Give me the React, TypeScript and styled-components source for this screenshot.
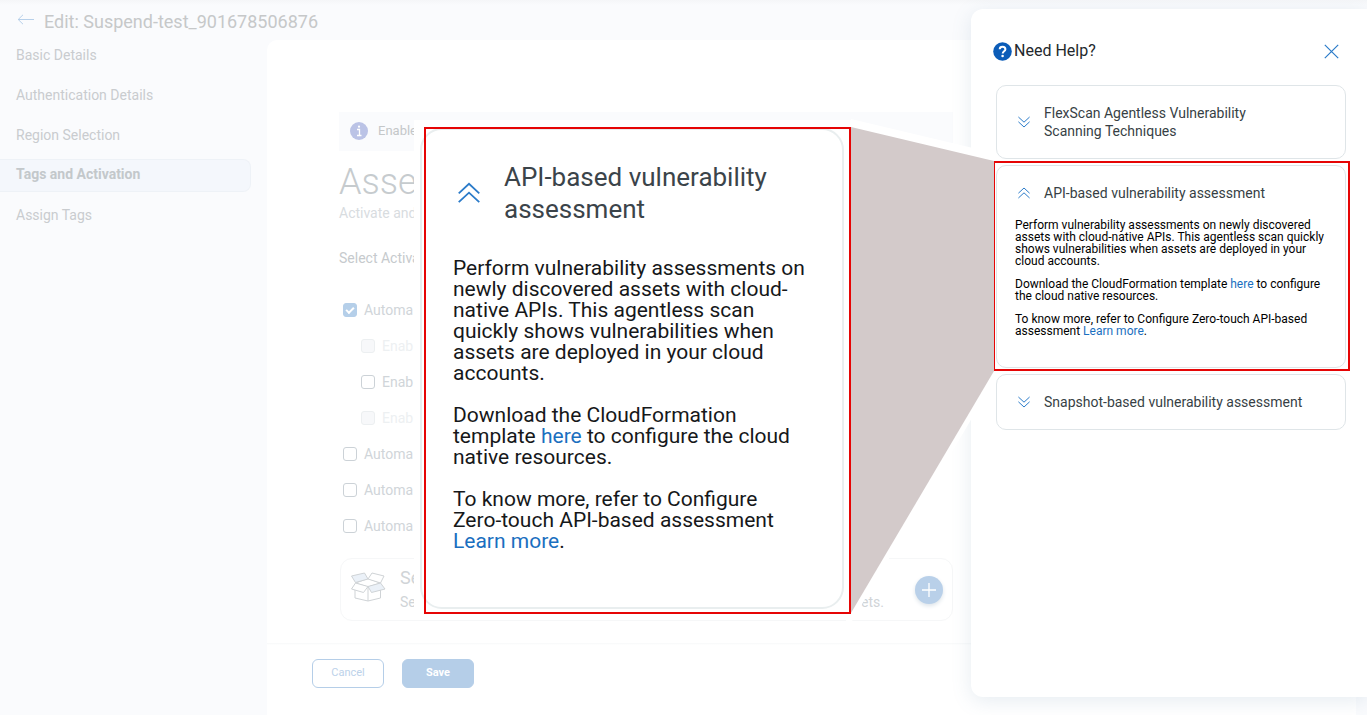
import React from "react";
import styled, { createGlobalStyle, css } from "styled-components";

const GlobalStyle = createGlobalStyle`
  *, *::before, *::after { box-sizing: border-box; }
  body {
    margin: 0;
    background: #fafbfd;
    font-family: Roboto, "Liberation Sans", sans-serif;
  }
  button, input { font-family: inherit; }
  h1, h2, h3, p { margin: 0; font-weight: 400; }
`;

const Page = styled.div`
  position: relative;
  display: flex;
  flex-direction: column;
  min-height: 100vh;
  overflow: hidden;
`;

const TopBar = styled.header`
  display: flex;
  align-items: center;
  gap: 8px;
  height: 39px;
  padding: 4px 16px 0;
  background: linear-gradient(#f5f6f8, #fafbfd 5px);
`;

const IconButton = styled.button`
  display: flex;
  align-items: center;
  justify-content: center;
  padding: 0;
  border: 0;
  background: none;
  cursor: pointer;
`;

const BackButton = styled(IconButton)`
  width: 20px;
  height: 20px;
  padding-bottom: 4px;
`;

const PageTitle = styled.h1`
  font-size: 18px;
  line-height: 24px;
  color: #c6c8c9;
`;

const Body = styled.div`
  display: flex;
  flex: 1;
`;

const Sidebar = styled.nav`
  display: flex;
  flex-direction: column;
  gap: 7px;
  width: 251px;
  margin-right: 16px;
  flex-shrink: 0;
`;

const NavLink = styled.a<{ $active?: boolean }>`
  padding: 7px 15px;
  border: 1px solid transparent;
  border-left: 0;
  border-radius: 0 8px 8px 0;
  padding-left: 16px;
  font-size: 14px;
  line-height: 17px;
  color: #c9cccf;
  text-decoration: none;
  ${(p) =>
    p.$active &&
    css`
      padding-top: 6px;
      padding-bottom: 8px;
      border-color: #eef2f7;
      background: #f4f7fc;
      color: #c3c8cb;
      font-weight: 700;
    `}
`;

const Main = styled.main`
  display: flex;
  flex: 1;
  flex-direction: column;
  margin: 1px 11px 0 0;
  border-top-left-radius: 10px;
  background: #fff;
`;

const Content = styled.div`
  display: flex;
  flex: 1;
  flex-direction: column;
  max-width: 686px;
  padding: 72px 0 22px 72px;
`;

const InfoBanner = styled.div`
  display: flex;
  align-items: center;
  gap: 10px;
  height: 39px;
  padding: 0 11px 2px;
  background: #fafbfd;
  font-size: 13px;
  line-height: 18px;
  color: #c4c7c9;
`;

const SectionTitle = styled.h2`
  margin-top: 9px;
  font-size: 36px;
  font-weight: 300;
  line-height: 44px;
  color: #c6cbce;
`;

const SectionHint = styled.p`
  font-size: 14px;
  line-height: 18px;
  color: #d8dcdf;
`;

const GroupLabel = styled.p`
  margin-top: 27px;
  font-size: 14px;
  line-height: 18px;
  color: #c6cacd;
`;

const OptionList = styled.div`
  display: flex;
  flex-direction: column;
  gap: 18px;
  margin-top: 34px;
  padding-left: 4px;
`;

const Option = styled.label<{ $nested?: boolean; $disabled?: boolean }>`
  display: flex;
  align-items: center;
  gap: 7px;
  padding-left: ${(p) => (p.$nested ? 18 : 0)}px;
  font-size: 14px;
  line-height: 18px;
  color: ${(p) => (p.$disabled ? "#edf0f2" : "#d0d5d9")};
`;

const CheckBox = styled.input`
  appearance: none;
  display: grid;
  place-items: center;
  width: 14px;
  height: 14px;
  margin: 0;
  border: 1px solid #ccd2d7;
  border-radius: 3px;
  background: #fff;
  &:disabled {
    border-color: #eceff1;
    background: #f7f8fa;
  }
  &:checked {
    border-color: #b5cfe9;
    background: #b5cfe9;
  }
  &:checked::before {
    content: "";
    width: 8px;
    height: 5px;
    margin-bottom: 2px;
    border: solid #fff;
    border-width: 0 0 2px 2px;
    transform: rotate(-45deg);
  }
`;

const TagCard = styled.section`
  display: flex;
  align-items: center;
  height: 63px;
  margin: 23px 0 0 1px;
  padding: 0 9px;
  border: 1px solid #f6f7f8;
  border-radius: 12px;
`;

const TagText = styled.div`
  display: flex;
  flex: 1;
  flex-direction: column;
  margin-left: 14px;
  color: #d0d4d7;
`;

const TagTitle = styled.h3`
  font-size: 18px;
  line-height: 24px;
`;

const TagLine = styled.p`
  display: flex;
  justify-content: space-between;
  padding-right: 31px;
  font-size: 14px;
  line-height: 24px;
`;

const AddButton = styled(IconButton)`
  width: 28px;
  height: 28px;
  border-radius: 50%;
  background: #b9d0e9;
  box-shadow: 0 2px 4px #dde4ea;
`;

const Footer = styled.footer`
  display: flex;
  align-items: flex-start;
  gap: 18px;
  height: 72px;
  padding: 16px 45px 0;
  background: linear-gradient(#f7f8f9, #fff 2px);
`;

const ActionButton = styled.button<{ $primary?: boolean }>`
  width: 72px;
  height: 29px;
  padding: 0 0 2px;
  border: 1px solid #b5cee8;
  border-radius: 6px;
  background: ${(p) => (p.$primary ? "#b5cee8" : "#fff")};
  color: ${(p) => (p.$primary ? "#fff" : "#bcd2ea")};
  font-size: 11px;
  font-weight: ${(p) => (p.$primary ? 700 : 400)};
`;

const HelpPanel = styled.aside`
  position: absolute;
  top: 9px;
  right: 0;
  bottom: 18px;
  display: flex;
  flex-direction: column;
  width: 396px;
  padding: 32px 21px 0 25px;
  border-radius: 12px 0 0 12px;
  background: #fff;
  box-shadow: 0 4px 20px rgba(90, 125, 160, 0.15);
`;

const HelpHeader = styled.div`
  display: flex;
  align-items: center;
  gap: 2px;
  height: 20px;
  margin: 0 7px 24px -3px;
`;

const HelpTitle = styled.h2`
  flex: 1;
  font-size: 16px;
  line-height: 20px;
  color: #23282c;
`;

const Accordion = styled.div`
  display: flex;
  flex-direction: column;
  gap: 6px;
`;

const Card = styled.section`
  position: relative;
  border: 1px solid #dfe5e8;
  border-radius: 10px;
`;

const CardHead = styled.button<{ $open?: boolean }>`
  display: flex;
  align-items: center;
  gap: 14px;
  width: 100%;
  padding: 18px 20px ${(p) => (p.$open ? 17 : 18)}px 21px;
  border: 0;
  background: none;
  color: #373f45;
  font-size: 14px;
  line-height: 18px;
  text-align: left;
  cursor: pointer;
`;

const CardBody = styled.div`
  display: flex;
  flex-direction: column;
  gap: 11px;
  padding: 0 20px 30px 18px;
  color: #000;
  font-size: 12px;
  line-height: 12px;
`;

const Link = styled.a`
  display: inline-block;
  color: #1a6fc0;
  text-decoration: none;
`;

/* Red frame drawn round the expanded card */
const Highlight = styled.div`
  position: absolute;
  inset: -5px -5px -4px -4px;
  border: 2px solid #e60505;
  pointer-events: none;
`;

const Connector = styled.svg`
  position: absolute;
  top: 115px;
  right: 373px;
`;

/* Enlarged copy of the expanded card; the outline keeps the red frame above the card edge */
const Callout = styled.section`
  position: absolute;
  top: 127px;
  right: 516px;
  isolation: isolate;
  width: 427px;
  height: 487px;
  padding: 34px 42px 0 29px;
  outline: 2px solid #e60505;
  outline-offset: -2px;
  &::before {
    content: "";
    position: absolute;
    z-index: -2;
    inset: -7px 0 5px -10px;
    background: #fff;
  }
  &::after {
    content: "";
    position: absolute;
    z-index: -1;
    inset: 1px 7px 5px -4px;
    border: 2px solid #e9eeef;
    border-radius: 22px;
  }
`;

const CalloutHead = styled.div`
  display: flex;
  align-items: center;
  gap: 24px;
  padding-left: 5px;
`;

const CalloutTitle = styled.h3`
  font-size: 26px;
  line-height: 32px;
  color: #3b444a;
`;

const CalloutBody = styled.div`
  display: flex;
  flex-direction: column;
  gap: 21px;
  margin-top: 33px;
  color: #16181a;
  font-size: 21px;
  line-height: 21px;
`;

const Chevrons = ({ up, size = 12 }: { up?: boolean; size?: number }) => (
  <svg width={size} height={size} viewBox="0 0 12 12" fill="none" stroke="#2b7bc9" aria-hidden="true">
    {up ? (
      <path d="M.4 6.2 6 1l5.600 5.200M.4 11 6 5.800 11.600 11" />
    ) : (
      <path d="M.4 1 6 6.200 11.600 1M.4 5.800 6 11l5.600-5.200" />
    )}
  </svg>
);

const BoxSvg = styled.svg`
  margin-bottom: 6px;
`;

const BoxIcon = () => (
  <BoxSvg width="36" height="32" viewBox="0 0 36 32" fill="#fff" stroke="#cfd3d6" strokeWidth="1" strokeLinejoin="round" aria-hidden="true">
    <path d="M5 16v11l13 3 12.500-3V16L18 11z" />
    <path d="M18 16v14" />
    <path d="M5.500 12 18 7.500 30.500 12 18 16z" />
    <path d="M1.500 5 14.500 2 18 8 5.500 11.500z" fill="#ebf1f8" />
    <path d="M18 8 22 2l12 3-3.500 7z" />
    <path d="M5.500 12 18 15.500 13.500 21.500 1.500 18z" />
    <path d="M18 15.500 30.500 12 35 18l-13.500 3.500z" fill="#ebf1f8" />
  </BoxSvg>
);

const navItems = ["Basic Details", "Authentication Details", "Region Selection", "Tags and Activation", "Assign Tags"];

const options = [
  { text: "Automa", checked: true },
  { text: "Enab", nested: true, disabled: true },
  { text: "Enab", nested: true },
  { text: "Enab", nested: true, disabled: true },
  { text: "Automa" },
  { text: "Automa" },
  { text: "Automa" },
];

const AssessmentHelp = () => (
  <>
    <p>
      Perform vulnerability assessments on newly discovered assets with cloud-native APIs. This agentless scan quickly
      shows vulnerabilities when assets are deployed in your cloud accounts.
    </p>
    <p>
      Download the CloudFormation template <Link href="#template">here</Link> to configure the cloud native resources.
    </p>
    <p>
      To know more, refer to Configure Zero-touch API-based assessment <Link href="#learn">Learn more</Link>.
    </p>
  </>
);

export default function App() {
  return (
    <Page>
      <GlobalStyle />
      <TopBar>
        <BackButton aria-label="Back">
          <svg width="18" height="12" viewBox="0 0 18 12" fill="none" stroke="#b7d0ea" aria-hidden="true">
            <path d="M17 5.500H1M6 .8 1.200 5.500 6 10.200" />
          </svg>
        </BackButton>
        <PageTitle>Edit: Suspend-test_901678506876</PageTitle>
      </TopBar>
      <Body>
        <Sidebar>
          {navItems.map((item) => (
            <NavLink key={item} href="#" $active={item === "Tags and Activation"}>
              {item}
            </NavLink>
          ))}
        </Sidebar>
        <Main>
          <Content>
            <InfoBanner>
              <svg width="18" height="18" viewBox="0 0 18 18" aria-hidden="true">
                <circle cx="9" cy="9" r="9" fill="#bbc3e6" />
                <path d="M7 7.500h2.500v6M7 13.500h4.500" stroke="#fff" strokeWidth="1.300" fill="none" />
                <circle cx="9" cy="4.700" r="1.100" fill="#fff" />
              </svg>
              Enable
            </InfoBanner>
            <SectionTitle>Asse</SectionTitle>
            <SectionHint>Activate and</SectionHint>
            <GroupLabel>Select Activa</GroupLabel>
            <OptionList>
              {options.map((o, i) => (
                <Option key={i} $nested={o.nested} $disabled={o.disabled}>
                  <CheckBox type="checkbox" defaultChecked={o.checked} disabled={o.disabled} />
                  {o.text}
                </Option>
              ))}
            </OptionList>
            <TagCard>
              <BoxIcon />
              <TagText>
                <TagTitle>Se</TagTitle>
                <TagLine>
                  <span>Se</span>
                  <span>ets.</span>
                </TagLine>
              </TagText>
              <AddButton aria-label="Add">
                <svg width="14" height="14" viewBox="0 0 14 14" stroke="#fff" strokeWidth="1.300" aria-hidden="true">
                  <path d="M7 0v14M0 7h14" />
                </svg>
              </AddButton>
            </TagCard>
          </Content>
          <Footer>
            <ActionButton>Cancel</ActionButton>
            <ActionButton $primary>Save</ActionButton>
          </Footer>
        </Main>
      </Body>

      <HelpPanel>
        <HelpHeader>
          <svg width="19" height="19" viewBox="0 0 19 19" aria-hidden="true">
            <circle cx="9.500" cy="9.500" r="9.300" fill="#0b5cb8" />
            <path d="M6.700 7.300c.1-3.400 5.700-3.300 5.700 0 0 2-2.700 2-2.700 4.200" stroke="#fff" strokeWidth="2" fill="none" />
            <circle cx="9.600" cy="14" r="1.300" fill="#fff" />
          </svg>
          <HelpTitle>Need Help?</HelpTitle>
          <IconButton aria-label="Close">
            <svg width="15" height="15" viewBox="0 0 15 15" stroke="#2b7bc9" strokeWidth="1.200" aria-hidden="true">
              <path d="M.8.8l13.400 13.400M14.200.8.8 14.200" />
            </svg>
          </IconButton>
        </HelpHeader>
        <Accordion>
          <Card>
            <CardHead aria-expanded={false}>
              <Chevrons />
              <span>
                FlexScan Agentless Vulnerability
                <br />
                Scanning Techniques
              </span>
            </CardHead>
          </Card>
          <Card>
            <CardHead $open aria-expanded>
              <Chevrons up />
              API-based vulnerability assessment
            </CardHead>
            <CardBody>
              <AssessmentHelp />
            </CardBody>
            <Highlight />
          </Card>
          <Card>
            <CardHead aria-expanded={false}>
              <Chevrons />
              Snapshot-based vulnerability assessment
            </CardHead>
          </Card>
        </Accordion>
      </HelpPanel>

      <Connector width="153" height="520" viewBox="0 0 153 520" aria-hidden="true">
        <path d="M10 4 153 38v8L10 500z" fill="#fff" />
        <path d="M10 12v486L153 256V46z" fill="#d3caca" stroke="#fff" strokeWidth="10" paintOrder="stroke" />
      </Connector>
      <Callout>
        <CalloutHead>
          <Chevrons up size={22} />
          <CalloutTitle>
            API-based vulnerability
            <br />
            assessment
          </CalloutTitle>
        </CalloutHead>
        <CalloutBody>
          <AssessmentHelp />
        </CalloutBody>
      </Callout>
    </Page>
  );
}
